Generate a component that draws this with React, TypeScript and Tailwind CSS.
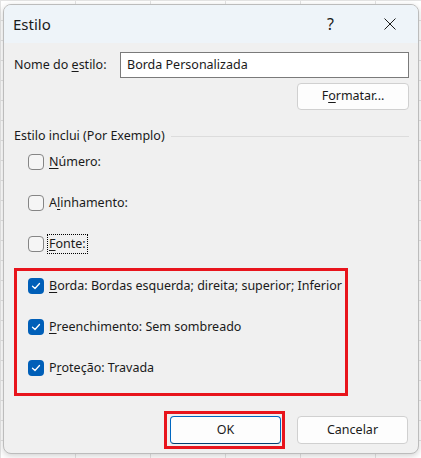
import React from 'react';

const font = { fontFamily: '"Noto Sans", "Segoe UI", sans-serif' };

const CheckIcon = () => (
  <svg width="10" height="10" viewBox="0 0 10 10" fill="none" stroke="white" strokeWidth="1.3" strokeLinecap="round" strokeLinejoin="round">
    <polyline points="1.5 5.2 4 7.5 8.5 2.5" />
  </svg>
);

const Checkbox = ({ checked }: { checked: boolean }) =>
  checked ? (
    <span className="grid h-[16px] w-[16px] shrink-0 place-items-center rounded-[4px] bg-[#005fb8]">
      <CheckIcon />
    </span>
  ) : (
    <span className="h-[16px] w-[16px] shrink-0 rounded-[4px] border border-[#858585] bg-[#f5f5f5]" />
  );

interface RowProps {
  checked: boolean;
  accel: string;
  before?: string;
  after: string;
  focus?: boolean;
  className?: string;
}

const Row = ({ checked, accel, before = '', after, focus, className = '' }: RowProps) => (
  <div className={`flex h-[20px] items-center gap-[5px] whitespace-nowrap ${className}`}>
    <Checkbox checked={checked} />
    <span className={`leading-[18px] ${focus ? '-ml-[2px] border border-dotted border-black px-[1px]' : ''}`}>
      {before}
      <span className="underline underline-offset-2">{accel}</span>
      {after}
    </span>
  </div>
);

export default function App() {
  return (
    <div
      className="h-[458px] w-[421px] overflow-hidden bg-white bg-[linear-gradient(to_right,#e3e3e3_1px,transparent_1px),linear-gradient(to_bottom,#e3e3e3_1px,transparent_1px)] bg-size-[75px_20px] pl-[3px] pt-[4px] text-[12.5px] text-[#1a1a1a]"
      style={font}
    >
      <div className="flex h-[450px] w-[416px] flex-col overflow-hidden rounded-[8px] border border-[#bcbcbc] bg-[#f0f0f0] shadow-[0_2px_6px_rgba(0,0,0,0.18)]">
        {/* title bar */}
        <div className="flex h-[38px] shrink-0 items-center bg-[#eef4f9] pl-[9px]">
          <span className="text-[15px]">Estilo</span>
          <span className="ml-auto mr-[50px] text-[16px]">?</span>
          <svg width="12" height="12" viewBox="0 0 12 12" className="mr-[22px]" stroke="#1a1a1a" strokeWidth="1">
            <line x1="0.5" y1="0.5" x2="11.5" y2="11.5" />
            <line x1="11.5" y1="0.5" x2="0.5" y2="11.5" />
          </svg>
        </div>

        <div className="flex flex-col px-[9px]">
          <div className="mt-[9px] flex h-[26px] items-center">
            <span className="w-[107px] pl-[1px]">
              Nome do <span className="underline underline-offset-2">e</span>stilo:
            </span>
            <div className="flex h-[26px] flex-1 items-center border border-[#7a7a7a] bg-white pl-[6px]">
              Borda Personalizada
            </div>
          </div>

          <div className="mt-[5px] flex justify-end">
            <button className="h-[27px] w-[112px] rounded-[4px] border border-[#d0d0d0] bg-[#fdfdfd]">
              F<span className="underline underline-offset-2">o</span>rmatar...
            </button>
          </div>

          <div className="mt-[17px] flex h-[18px] items-center">
            <span className="pl-[1px]">Estilo inclui (Por Exemplo)</span>
            <div className="ml-[6px] h-px flex-1 bg-[#dcdcdc]" />
          </div>

          <div className="flex flex-col pl-[15px]">
            <Row checked={false} accel="N" after="úmero:" className="mt-[7px]" />
            <Row checked={false} before="A" accel="l" after="inhamento:" className="mt-[21px]" />
            <Row checked={false} accel="F" after="onte:" focus className="mt-[21px]" />
          </div>

          <div className="ml-px mt-[14px] flex h-[128px] w-[334px] flex-col border-[3px] border-[#e8141c] pl-[11px] pt-[5px]">
            <Row checked accel="B" after="orda: Bordas esquerda; direita; superior; Inferior" />
            <Row checked accel="P" after="reenchimento: Sem sombreado" className="mt-[21px]" />
            <Row checked before="P" accel="r" after="oteção: Travada" className="mt-[21px]" />
          </div>

          <div className="mt-[15px] flex items-start">
            <div className="ml-[151px] border-[3px] border-[#e8141c] py-[2px] pl-[3px] pr-[1px]">
              <button className="h-[28px] w-[111px] rounded-[4px] border border-[#0067c0] bg-[#fdfdfd] border-b-[#003e73]">
                OK
              </button>
            </div>
            <button className="ml-[12px] mt-[5px] h-[28px] w-[111px] rounded-[4px] border border-[#d0d0d0] bg-[#fdfdfd]">
              Cancelar
            </button>
          </div>
        </div>
      </div>
    </div>
  );
}
